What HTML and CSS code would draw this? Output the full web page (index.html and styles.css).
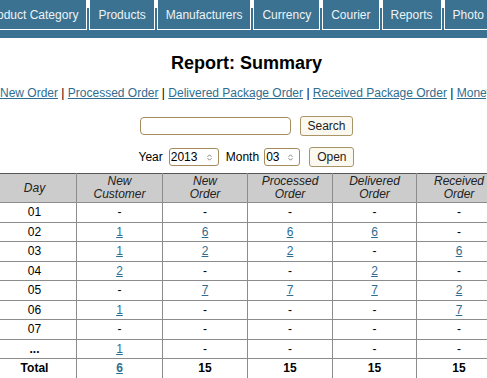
FILE: index.html
```html
<!DOCTYPE html>
<html>
<head>
<meta charset="utf-8">
<link rel="stylesheet" href="styles.css">
</head>
<body>
<nav class="nav">
  <a class="tab tab-first">Product Category</a>
  <a class="tab">Products</a>
  <a class="tab">Manufacturers</a>
  <a class="tab">Currency</a>
  <a class="tab">Courier</a>
  <a class="tab">Reports</a>
  <a class="tab">Photo</a>
</nav>
<main class="main">
  <h1 class="title">Report: Summary</h1>
  <p class="links"><a href="#">New Order</a> | <a href="#">Processed Order</a> | <a href="#">Delivered Package Order</a> | <a href="#">Received Package Order</a> | <a href="#">Money Transfer</a></p>
  <form class="search-row">
    <input class="search-input" type="text">
    <button class="btn" type="button">Search</button>
  </form>
  <form class="date-row">
    <span class="label">Year</span>
    <span class="select select-year"><span class="select-val">2013</span><svg class="arrows" width="5" height="7" viewBox="0 0 5 7"><path d="M0.5 2.8 L2.5 0.8 L4.5 2.8 M0.5 4.2 L2.5 6.2 L4.5 4.2" fill="none" stroke="#777" stroke-width="0.9"/></svg></span>
    <span class="label label-month">Month</span>
    <span class="select select-month"><span class="select-val">03</span><svg class="arrows" width="5" height="7" viewBox="0 0 5 7"><path d="M0.5 2.8 L2.5 0.8 L4.5 2.8 M0.5 4.2 L2.5 6.2 L4.5 4.2" fill="none" stroke="#777" stroke-width="0.9"/></svg></span>
    <button class="btn btn-open" type="button">Open</button>
  </form>
</main>
<table class="report">
  <colgroup>
    <col class="c1"><col class="c2"><col class="c3"><col class="c4"><col class="c5"><col class="c6"><col class="c7">
  </colgroup>
  <thead>
    <tr><th>Day</th><th>New<br>Customer</th><th>New<br>Order</th><th>Processed<br>Order</th><th>Delivered<br>Order</th><th>Received<br>Order</th><th>Money<br>Transfer</th></tr>
  </thead>
  <tbody>
    <tr><td>01</td><td>-</td><td>-</td><td>-</td><td>-</td><td>-</td><td>-</td></tr>
    <tr><td>02</td><td><a href="#">1</a></td><td><a href="#">6</a></td><td><a href="#">6</a></td><td><a href="#">6</a></td><td>-</td><td>-</td></tr>
    <tr><td>03</td><td><a href="#">1</a></td><td><a href="#">2</a></td><td><a href="#">2</a></td><td>-</td><td><a href="#">6</a></td><td>-</td></tr>
    <tr><td>04</td><td><a href="#">2</a></td><td>-</td><td>-</td><td><a href="#">2</a></td><td>-</td><td>-</td></tr>
    <tr><td>05</td><td>-</td><td><a href="#">7</a></td><td><a href="#">7</a></td><td><a href="#">7</a></td><td><a href="#">2</a></td><td>-</td></tr>
    <tr><td>06</td><td><a href="#">1</a></td><td>-</td><td>-</td><td>-</td><td><a href="#">7</a></td><td>-</td></tr>
    <tr><td>07</td><td>-</td><td>-</td><td>-</td><td>-</td><td>-</td><td>-</td></tr>
    <tr><td class="b">...</td><td><a href="#">1</a></td><td>-</td><td>-</td><td>-</td><td>-</td><td>-</td></tr>
    <tr class="total"><td>Total</td><td><a href="#">6</a></td><td>15</td><td>15</td><td>15</td><td>15</td><td>0</td></tr>
  </tbody>
</table>
</body>
</html>
```
FILE: styles.css
```css
html, body {
  margin: 0;
  padding: 0;
  overflow: hidden;
  background: #fff;
}
body {
  font-family: "Liberation Sans", Arial, sans-serif;
  font-size: 12px;
  color: #000;
  width: 487px;
  height: 378px;
}
a { color: #2f6d90; }

.nav {
  display: flex;
  gap: 2px;
  height: 38px;
  margin-left: -24px;
  width: 600px;
  background: linear-gradient(#fff 0, #fff 8px, #3b7291 8px);
}
.tab {
  flex-shrink: 0;
  display: flex;
  align-items: center;
  height: 29px;
  padding: 0 8px;
  background: #3b7291;
  color: #eef3f6;
  border: 1px solid #fff;
  border-top: 0;
  white-space: nowrap;
  font-size: 12px;
}

.main {
  padding-left: 6px;
  text-align: center;
}
.title {
  font-size: 18px;
  font-weight: bold;
  margin: 14px 0 0;
  line-height: 22px;
}
.links {
  margin: 12px 0 0;
  line-height: 14px;
  white-space: nowrap;
  text-align: left;
  margin-left: -6px;
}
.search-row {
  display: flex;
  justify-content: center;
  align-items: center;
  gap: 9px;
  margin-top: 16px;
  height: 20px;
}
.search-input {
  box-sizing: border-box;
  width: 151px;
  height: 18px;
  border: 1px solid #a48c5c;
  border-radius: 4px;
  padding: 0;
  margin: 0;
}
.btn {
  box-sizing: border-box;
  height: 20px;
  padding: 0 6px;
  margin: 0;
  font-family: "Liberation Sans", Arial, sans-serif;
  font-size: 12px;
  color: #222;
  background: #fbf8f0;
  border: 1px solid #a89466;
  border-radius: 3px;
}
.date-row {
  display: flex;
  justify-content: center;
  align-items: center;
  margin-top: 11px;
  height: 20px;
}
.label { margin-right: 6px; }
.label-month { margin-left: 7px; margin-right: 5px; }
.select {
  box-sizing: border-box;
  display: inline-flex;
  align-items: center;
  height: 18px;
  border: 1px solid #a48c5c;
  border-radius: 3px;
  background: #fff;
  padding-left: 1px;
}
.select-year { width: 50px; }
.select-month { width: 36px; }
.select-val { flex: 1; text-align: left; }
.arrows { margin-right: 6px; }
.btn-open { margin-left: 9px; padding: 0 7px; }

.report {
  border-collapse: collapse;
  table-layout: fixed;
  margin-left: -8px;
  margin-top: 6px;
  width: 595px;
}
.c1 { width: 84px; }
.c2 { width: 86px; }
.c3, .c4, .c6, .c7 { width: 85px; }
.c5 { width: 84px; }
.report th {
  background: #cccccc;
  font-weight: normal;
  font-style: italic;
  color: #222;
  border: 1px solid #8c8c8c;
  border-top-color: #555;
  height: 28px;
  padding: 0;
  line-height: 13px;
}
.report td {
  border: 1px solid #8c8c8c;
  text-align: center;
  height: 18.5px;
  padding: 0;
  line-height: 14px;
}
.report td.b, .total td { font-weight: bold; }
```
